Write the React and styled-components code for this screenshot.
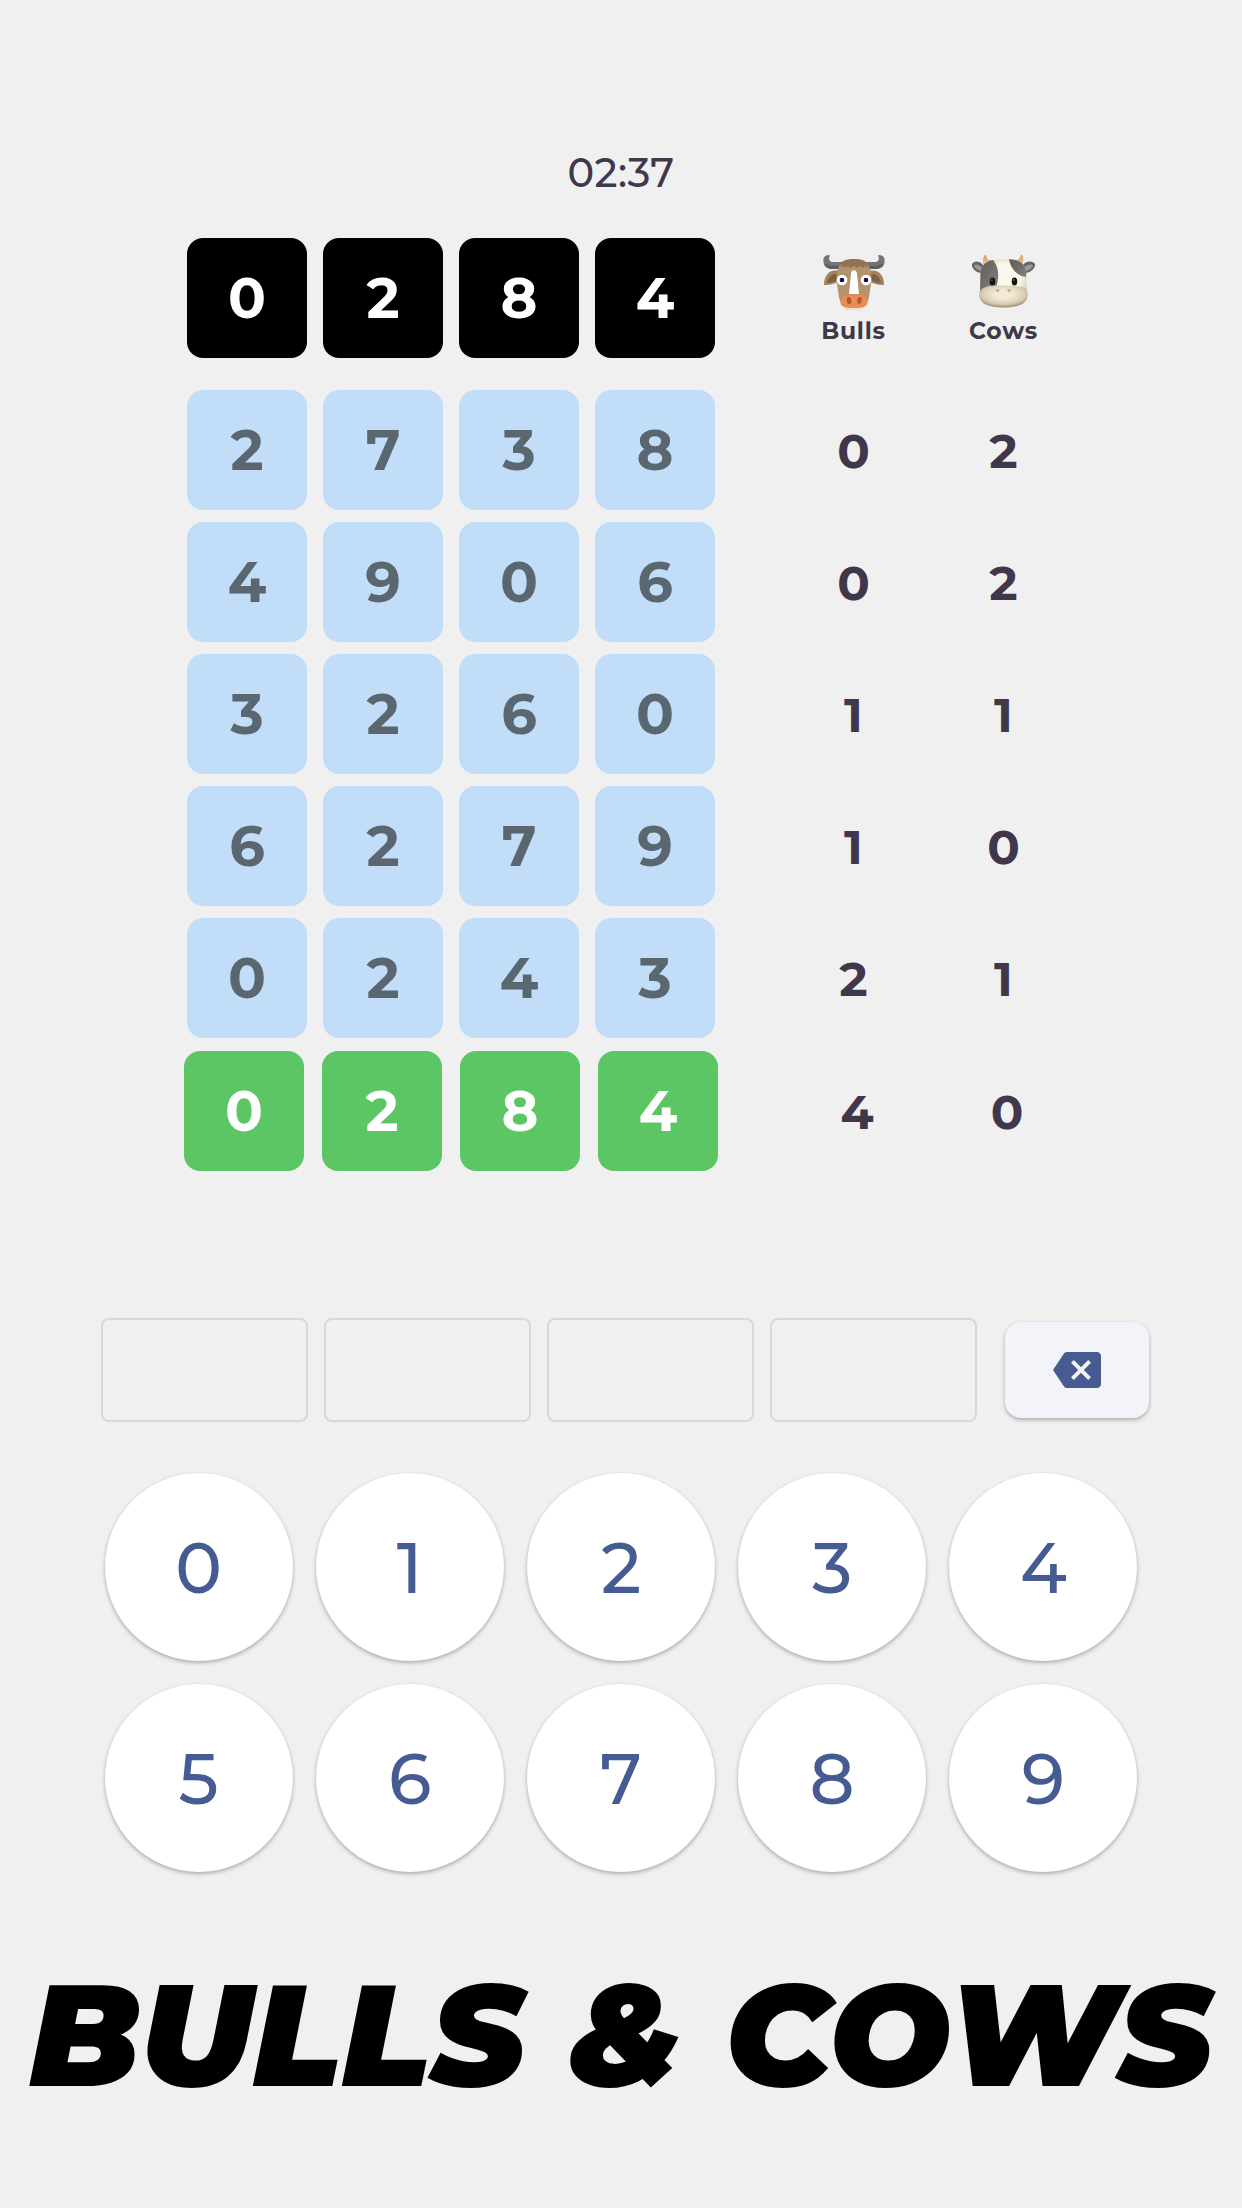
import React, { useState } from "react";
import styled, { createGlobalStyle } from "styled-components";
import { MdBackspace } from "react-icons/md";

const answer = ["0", "2", "8", "4"];

const guesses = [
  { digits: ["2", "7", "3", "8"], bulls: 0, cows: 2 },
  { digits: ["4", "9", "0", "6"], bulls: 0, cows: 2 },
  { digits: ["3", "2", "6", "0"], bulls: 1, cows: 1 },
  { digits: ["6", "2", "7", "9"], bulls: 1, cows: 0 },
  { digits: ["0", "2", "4", "3"], bulls: 2, cows: 1 },
  { digits: ["0", "2", "8", "4"], bulls: 4, cows: 0 },
];

const keys = ["0", "1", "2", "3", "4", "5", "6", "7", "8", "9"];

function BullIcon() {
  return (
    <svg width="66" height="64" viewBox="0 0 66 64">
      <path d="M17 21 C9 19 3 25 3 35 C10 35 17 33 20 29 Z" fill="#a5825f" />
      <path d="M49 21 C57 19 63 25 63 35 C56 35 49 33 46 29 Z" fill="#a5825f" />
      <path d="M18 24 C11 23 7 27 6 33 C12 33 17 30 19 28 Z" fill="#7d6248" />
      <path d="M48 24 C55 23 59 27 60 33 C54 33 49 30 47 28 Z" fill="#7d6248" />
      <path d="M9 5 C3 5 2 8 2.5 12 C3 17 6 19 11 19 L21 19 L21 12 L12 12 C9 12 7 10 9 5 Z" fill="#737477" />
      <path d="M57 5 C63 5 64 8 63.5 12 C63 17 60 19 55 19 L45 19 L45 12 L54 12 C57 12 59 10 57 5 Z" fill="#737477" />
      <path d="M6 14 C8 16 14 16 21 15.5 L21 19 L11 19 C8 19 6 17 4 14 Z" fill="#5c5d60" />
      <path d="M60 14 C58 16 52 16 45 15.5 L45 19 L55 19 C58 19 60 17 62 14 Z" fill="#5c5d60" />
      <path d="M20 14 C25 9 41 9 46 14 C51 19 51 27 50 34 L48 47 C47 54 42 58 33 58 C24 58 19 54 18 47 L16 34 C15 27 15 19 20 14 Z" fill="#b3936e" />
      <path d="M30 24 C30 19 36 19 36 24 L38 44 L28 44 Z" fill="#fff" />
      <path d="M20 18 C18 11 24 9 33 9 C42 9 48 11 46 18 L44 16 L42 18 L39 16 L36 18 L33 16 L29 18 L27 16 L24 18 L22 16 Z" fill="#927253" />
      <circle cx="21" cy="30" r="5.3" fill="#fff" />
      <circle cx="45" cy="30" r="5.3" fill="#fff" />
      <circle cx="21" cy="30" r="2.3" fill="#0b0b45" />
      <circle cx="45" cy="30" r="2.3" fill="#0b0b45" />
      <path d="M22 57 C26 55.5 40 55.5 44 57 C41 60 38 61 36 60 C34 59.5 32 59.5 30 60.5 C27 61 24 60 22 57 Z" fill="#f3dcd0" />
      <path d="M25 45 C28 43.5 38 43.5 41 45 C45 46 47 49 46.5 53 C46 57 41 58 33 58 C25 58 20 57 19.5 53 C19 49 21 46 25 45 Z" fill="#e98b56" />
      <ellipse cx="28" cy="50.5" rx="2.3" ry="3.5" fill="#b9562f" transform="rotate(-10 28 50.5)" />
      <ellipse cx="38.5" cy="50.5" rx="2.3" ry="3.5" fill="#b9562f" transform="rotate(10 38.5 50.5)" />
    </svg>
  );
}

function CowIcon() {
  return (
    <svg width="68" height="64" viewBox="0 0 68 64">
      <defs>
        <radialGradient id="face" cx="0.5" cy="0.45" r="0.62">
          <stop offset="0.55" stopColor="#fbf8ee" />
          <stop offset="1" stopColor="#c9bc9b" />
        </radialGradient>
        <radialGradient id="muzzle" cx="0.5" cy="0.4" r="0.6">
          <stop offset="0.3" stopColor="#f2ead8" />
          <stop offset="0.75" stopColor="#d9ccb0" />
          <stop offset="1" stopColor="#998b6d" />
        </radialGradient>
        <linearGradient id="patch" x1="0" y1="0" x2="1" y2="1">
          <stop offset="0" stopColor="#5c5a57" />
          <stop offset="1" stopColor="#83817d" />
        </linearGradient>
        <linearGradient id="horn" x1="0" y1="0" x2="0" y2="1">
          <stop offset="0" stopColor="#c9995f" />
          <stop offset="1" stopColor="#ecd2a4" />
        </linearGradient>
        <clipPath id="head">
          <path d="M34 9 C49 9 55 12.5 56 22 L57 42 C56 50 46 54 34 54 C22 54 11 50 10 42 L10.5 22 C12 12.5 19 9 34 9 Z" />
        </clipPath>
      </defs>
      <path d="M13 15 C8 9 3 12 2 14 C1 18 6 23 12 23 Z" fill="#676562" />
      <path d="M53 15 C58 9 64 12 65 14 C66 18 60 23 55 23 Z" fill="#676562" />
      <path d="M12 18 C8 13 5 14.5 4 15.5 C5 18 8 21 12 21 Z" fill="#9b9894" />
      <path d="M54 18 C58 13 62 14.5 63 15.5 C62 18 59 21 55 21 Z" fill="#9b9894" />
      <path d="M14 16 C12 11 13 6 16 4.5 C16 8 18 10 22 11 Z" fill="url(#horn)" />
      <path d="M52 16 C54 11 54 6 51 4.5 C51 8 48 10 44 11 Z" fill="url(#horn)" />
      <path d="M34 9 C49 9 55 12.5 56 22 L57 42 C56 50 46 54 34 54 C22 54 11 50 10 42 L10.5 22 C12 12.5 19 9 34 9 Z" fill="url(#face)" />
      <g clipPath="url(#head)">
        <path d="M8 8 L22 9 C30 17 29 29 26 38 L8 42 Z" fill="url(#patch)" />
        <path d="M39 8 L58 8 L58 27 C48 27 40 19 39 8 Z" fill="url(#patch)" />
      </g>
      <ellipse cx="22.5" cy="31.5" rx="2.8" ry="4" fill="#16120f" />
      <ellipse cx="44.5" cy="31.5" rx="2.8" ry="4" fill="#16120f" />
      <circle cx="21.8" cy="30" r="0.8" fill="#8b8783" />
      <circle cx="43.8" cy="30" r="0.8" fill="#8b8783" />
      <path d="M33.5 35.5 C47 35.5 57.5 36 57.8 44 C58 54 48 57.5 33.5 57.5 C19 57.5 9 54 9.2 44 C9.5 36 20 35.5 33.5 35.5 Z" fill="url(#muzzle)" />
      <circle cx="27.6" cy="40.5" r="1.8" fill="#d2b083" />
      <circle cx="39.2" cy="40.5" r="1.8" fill="#d2b083" />
    </svg>
  );
}

function App() {
  const [input, setInput] = useState([]);

  const onPressKey = (key) => {
    if (input.length < 4 && !input.includes(key)) {
      setInput([...input, key]);
    }
  };
  const onBackspace = () => {
    setInput(input.slice(0, -1));
  };

  return (
    <Page>
      <GlobalStyle />
      <Timer>02:37</Timer>
      <Board>
        <AnswerRow>
          <Tiles>
            {answer.map((digit) => (
              <Tile key={digit} $type="answer">
                {digit}
              </Tile>
            ))}
          </Tiles>
          <Scores>
            <Legend>
              <BullIcon />
              <LegendText>Bulls</LegendText>
            </Legend>
            <Legend>
              <CowIcon />
              <LegendText>Cows</LegendText>
            </Legend>
          </Scores>
        </AnswerRow>
        {guesses.map((guess, index) => {
          const solved = guess.bulls === 4;
          return (
            <Row key={index} $solved={solved}>
              <Tiles $solved={solved}>
                {guess.digits.map((digit) => (
                  <Tile key={digit} $type={solved ? "solved" : "guess"}>
                    {digit}
                  </Tile>
                ))}
              </Tiles>
              <Scores>
                <Score>{guess.bulls}</Score>
                <Score>{guess.cows}</Score>
              </Scores>
            </Row>
          );
        })}
      </Board>
      <InputSection>
        {[0, 1, 2, 3].map((i) => (
          <Slot key={i}>{input[i]}</Slot>
        ))}
        <BackspaceButton onClick={onBackspace}>
          <MdBackspace size={48} />
        </BackspaceButton>
      </InputSection>
      <Keypad>
        {keys.map((key) => (
          <Key key={key} onClick={() => onPressKey(key)}>
            {key}
          </Key>
        ))}
      </Keypad>
      <Title>BULLS &amp; COWS</Title>
    </Page>
  );
}

const GlobalStyle = createGlobalStyle`
  * {
    box-sizing: border-box;
  }
  body {
    margin: 0;
    background-color: #f0f0f0;
  }
  button {
    padding: 0;
    border: none;
    font-family: inherit;
    cursor: pointer;
  }
`;

const Page = styled.div`
  display: flex;
  flex-direction: column;
  width: 1242px;
  height: 2208px;
  padding-top: 148px;
  overflow: hidden;
  background-color: #f0f0f0;
  color: #41374b;
  font-family: Montserrat, Inter, "Liberation Sans", sans-serif;
`;

const Timer = styled.div`
  height: 50px;
  line-height: 50px;
  text-align: center;
  font-size: 40px;
  font-weight: 500;
  letter-spacing: 0.4px;
`;

const Board = styled.div`
  display: flex;
  flex-direction: column;
  gap: 12px;
  margin-top: 40px;
`;

const Row = styled.div`
  display: flex;
  gap: ${(props) => (props.$solved ? "64px" : "63.5px")};
  height: 120px;
  margin-top: ${(props) => (props.$solved ? "1px" : "0")};
  padding-left: ${(props) => (props.$solved ? "184px" : "187px")};
`;

const AnswerRow = styled(Row)`
  margin-bottom: 20px;
`;

const Tiles = styled.div`
  display: flex;
  gap: ${(props) => (props.$solved ? "18px" : "16px")};
`;

const tileColors = {
  answer: { background: "#000000", text: "#ffffff" },
  guess: { background: "#c2ddf8", text: "#5a6670" },
  solved: { background: "#5cc664", text: "#ffffff" },
};

const Tile = styled.div`
  display: flex;
  align-items: center;
  justify-content: center;
  width: 120px;
  height: 120px;
  border-radius: 16px;
  background-color: ${(props) => tileColors[props.$type].background};
  color: ${(props) => tileColors[props.$type].text};
  font-size: 56px;
  font-weight: 700;
`;

const Scores = styled.div`
  display: flex;
`;

const Score = styled.div`
  display: flex;
  align-items: center;
  justify-content: center;
  width: 150px;
  padding-top: 2px;
  font-size: 48px;
  font-weight: 700;
`;

const Legend = styled.div`
  display: flex;
  flex-direction: column;
  align-items: center;
  width: 150px;
  padding-top: 12px;
`;

const LegendText = styled.span`
  margin-top: 2px;
  line-height: 30px;
  font-size: 23.5px;
  font-weight: 700;
  letter-spacing: 0.8px;
`;

const InputSection = styled.div`
  display: flex;
  align-items: center;
  gap: 16px;
  margin-top: 147px;
  padding-left: 101px;
`;

const Slot = styled.div`
  display: flex;
  align-items: center;
  justify-content: center;
  width: 207px;
  height: 104px;
  border: 2px solid #d8d8d8;
  border-radius: 8px;
  color: #465b92;
  font-size: 56px;
  font-weight: 500;
`;

const BackspaceButton = styled.button`
  display: flex;
  align-items: center;
  justify-content: center;
  width: 144px;
  height: 96px;
  margin-left: 12px;
  border-radius: 16px;
  background-color: #f3f3fa;
  box-shadow: 0 2px 4px rgba(0, 0, 0, 0.25), 0 1px 3px rgba(0, 0, 0, 0.06);
  color: #465b92;
`;

const Keypad = styled.div`
  display: grid;
  grid-template-columns: repeat(5, 188px);
  column-gap: 23.2px;
  row-gap: 23.2px;
  margin-top: 51px;
  padding-left: 104.6px;
`;

const Key = styled.button`
  height: 188px;
  padding-top: 2px;
  border-radius: 50%;
  background-color: #fff;
  box-shadow: 0 2px 4px rgba(0, 0, 0, 0.25), 0 1px 3px rgba(0, 0, 0, 0.06);
  color: #465b92;
  font-size: 70px;
  font-weight: 500;
`;

const Title = styled.h1`
  margin: 75px 0 0;
  text-align: center;
  white-space: nowrap;
  line-height: 176px;
  color: #000;
  font-size: 144px;
  font-weight: 900;
  font-style: italic;
  letter-spacing: 0.3px;
`;

export default App;
